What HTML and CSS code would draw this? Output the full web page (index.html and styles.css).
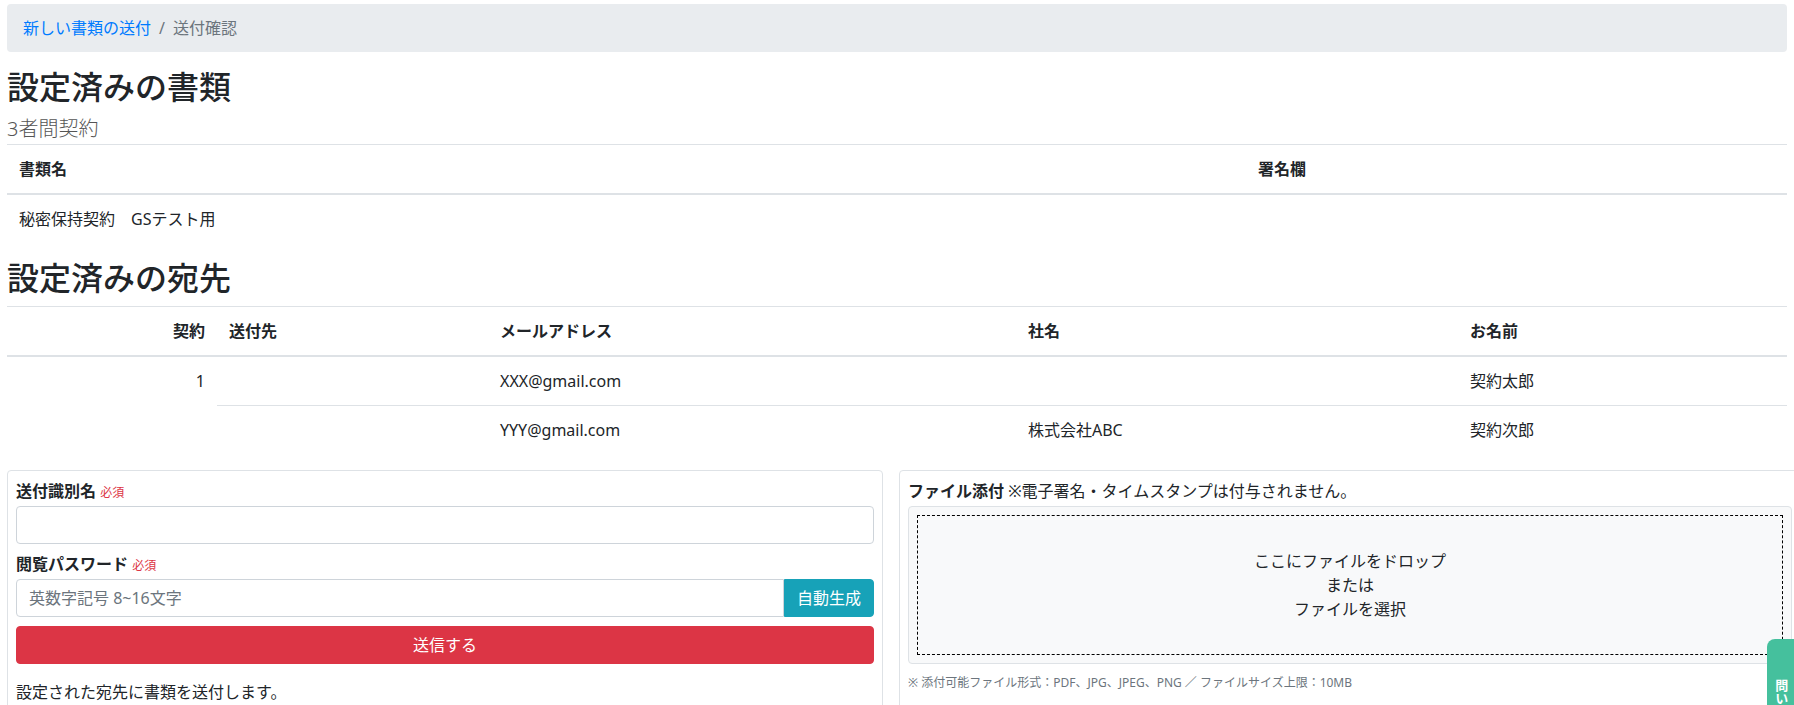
FILE: index.html
```html
<!DOCTYPE html>
<html>
<head>
    <title>送付確認</title>
    <link rel="stylesheet" href="styles.css">
</head>
<body>
    <div class="page">
        <nav class="crumbs">
            <a class="crumb-link" href="#">新しい書類の送付</a>
            <span class="crumb-sep">/</span>
            <span class="crumb-current">送付確認</span>
        </nav>

        <h2 class="section-title">設定済みの書類</h2>
        <p class="lead">3者間契約</p>
        <table class="data-table">
            <colgroup>
                <col class="col-docname">
                <col>
            </colgroup>
            <thead>
                <tr><th>書類名</th><th>署名欄</th></tr>
            </thead>
            <tbody>
                <tr><td>秘密保持契約　GSテスト用</td><td></td></tr>
            </tbody>
        </table>

        <h2 class="section-title">設定済みの宛先</h2>
        <table class="data-table">
            <colgroup>
                <col class="col-contract">
                <col class="col-dest">
                <col class="col-mail">
                <col class="col-company">
                <col>
            </colgroup>
            <thead>
                <tr>
                    <th class="num">契約</th>
                    <th>送付先</th>
                    <th>メールアドレス</th>
                    <th>社名</th>
                    <th>お名前</th>
                </tr>
            </thead>
            <tbody>
                <tr>
                    <td class="num" rowspan="2">1</td>
                    <td></td>
                    <td>XXX@gmail.com</td>
                    <td></td>
                    <td>契約太郎</td>
                </tr>
                <tr>
                    <td></td>
                    <td>YYY@gmail.com</td>
                    <td>株式会社ABC</td>
                    <td>契約次郎</td>
                </tr>
            </tbody>
        </table>

        <div class="panels">
            <form class="card" id="sendForm">
                <div class="field">
                    <label class="field-label">送付識別名 <span class="required">必須</span></label>
                    <input class="text-input" type="text" name="title">
                </div>
                <div class="field">
                    <label class="field-label">閲覧パスワード <span class="required">必須</span></label>
                    <div class="input-group">
                        <input class="text-input" type="text" name="password" placeholder="英数字記号 8~16文字">
                        <button class="btn btn-info" type="button">自動生成</button>
                    </div>
                </div>
                <button class="btn btn-danger btn-block" type="submit">送信する</button>
                <p class="note">設定された宛先に書類を送付します。</p>
            </form>

            <div class="card">
                <label class="field-label">ファイル添付 <span class="plain">※電子署名・タイムスタンプは付与されません。</span></label>
                <div class="drop-area">
                    <div class="drop-zone">
                        <span>ここにファイルをドロップ</span>
                        <span>または</span>
                        <span>ファイルを選択</span>
                    </div>
                </div>
                <small class="hint">※ 添付可能ファイル形式：PDF、JPG、JPEG、PNG ／ ファイルサイズ上限：10MB</small>
            </div>
        </div>
    </div>

    <a class="contact-tab" href="#">問い合わせ</a>
</body>
</html>
```

FILE: styles.css
```css
html { overflow-x: hidden; }
body { margin: 0; font-family: "Noto Sans", "Noto Sans CJK JP", sans-serif; font-size: 16px; line-height: 1.5; color: #212529; background: #fff; }
.page { padding: 4px 7px 0; }

.crumbs { display: flex; align-items: center; height: 48px; padding: 0 16px; margin-bottom: 16px; background: #e9ecef; border-radius: 4px; box-sizing: border-box; }
.crumb-link { color: #007bff; text-decoration: none; }
.crumb-sep { color: #6c757d; padding: 0 8px; }
.crumb-current { color: #6c757d; }

.section-title { font-size: 32px; font-weight: 500; line-height: 1.2; margin: 0 0 8px; }
.lead { font-size: 20px; font-weight: 300; color: #555; margin: 0; line-height: 1.5; }

.data-table { width: 100%; border-collapse: collapse; margin-bottom: 16px; table-layout: fixed; }
.data-table th, .data-table td { padding: 12px; text-align: left; vertical-align: top; border-top: 1px solid #dee2e6; }
.data-table thead th { border-bottom: 2px solid #dee2e6; font-weight: 700; }
.data-table .num { text-align: right; }
.col-docname { width: 1239px; }
.col-contract { width: 210px; }
.col-dest { width: 271px; }
.col-mail { width: 528px; }
.col-company { width: 442px; }

.panels { display: grid; grid-template-columns: 876px 902px; gap: 16px; margin-top: 2px; }
.card { border: 1px solid #dee2e6; border-radius: 4px; padding: 8px; margin: 0; }
.field { margin-bottom: 8px; }
.field-label { display: block; font-weight: 700; margin-bottom: 3px; }
.required { color: #dc3545; font-size: 12px; font-weight: 400; }
.plain { font-weight: 400; }

.text-input { display: block; width: 100%; height: 38px; box-sizing: border-box; padding: 6px 12px; font: inherit; color: #495057; border: 1px solid #ced4da; border-radius: 4px; }
.text-input::placeholder { color: #6c757d; }
.input-group { display: flex; }
.input-group .text-input { flex: 1; border-radius: 4px 0 0 4px; }
.input-group .btn { border-radius: 0 4px 4px 0; }

.btn { height: 38px; padding: 6px 12px; font: inherit; color: #fff; border: 1px solid transparent; border-radius: 4px; box-sizing: border-box; }
.btn-info { background: #17a2b8; border-color: #17a2b8; width: 90px; }
.btn-danger { background: #dc3545; border-color: #dc3545; }
.btn-block { display: block; width: 100%; margin-top: 9px; }
.note { margin: 16px 0 0; }

.drop-area { background: #f8f9fa; border: 1px solid #dee2e6; border-radius: 4px; padding: 8px; }
.drop-zone { display: flex; flex-direction: column; align-items: center; justify-content: center; height: 138px; border: 1px dashed #000; }
.hint { display: block; margin-top: 10px; font-size: 12px; color: #6c757d; }

.contact-tab { position: fixed; top: 639px; left: 1767px; width: 34px; height: 120px; padding-top: 40px; box-sizing: border-box; background: #45c09d; color: #fff; border-radius: 8px 0 0 0; text-decoration: none; font-size: 13px; font-weight: 700; writing-mode: vertical-rl; text-orientation: upright; display: flex; align-items: center; padding-right: 7px; }
```
